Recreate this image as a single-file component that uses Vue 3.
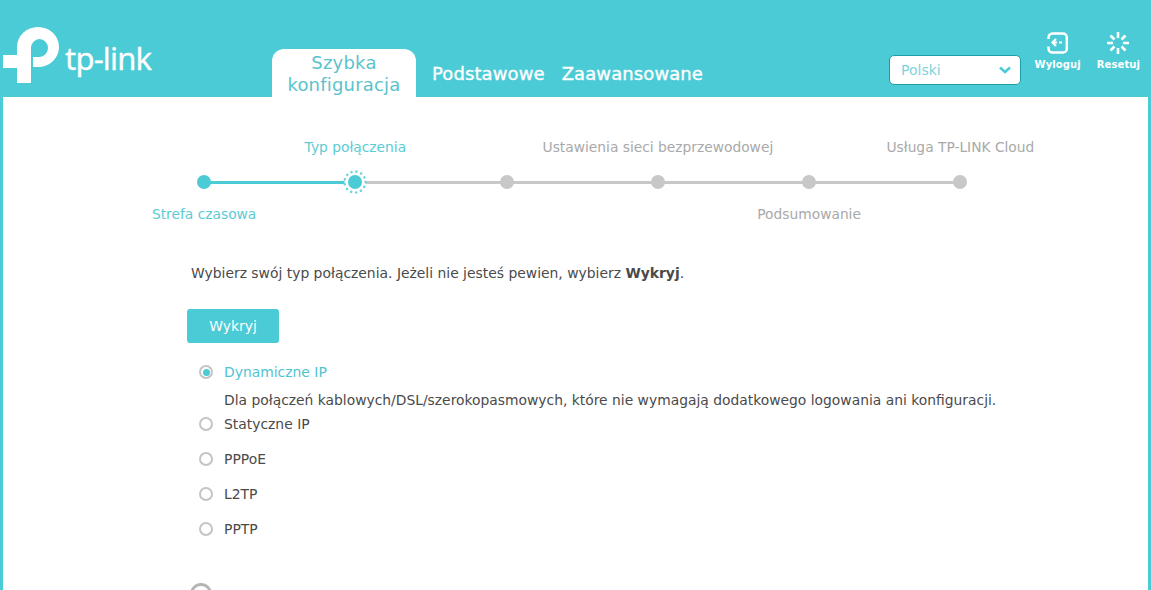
<script setup>
import { ref } from 'vue'

const nodes = [
  { top: '', bottom: 'Strefa czasowa', state: 'done' },
  { top: 'Typ połączenia', bottom: '', state: 'current' },
  { top: '', bottom: '', state: '' },
  { top: 'Ustawienia sieci bezprzewodowej', bottom: '', state: '' },
  { top: '', bottom: 'Podsumowanie', state: '' },
  { top: 'Usługa TP-LINK Cloud', bottom: '', state: 'last' }
]

const types = ['Dynamiczne IP', 'Statyczne IP', 'PPPoE', 'L2TP', 'PPTP']
const selected = ref('Dynamiczne IP')
</script>

<template>
  <div class="page">
    <header class="top">
      <div class="logo">
        <svg class="logo-mark" viewBox="3 27 57 56" width="57" height="56">
          <path d="M3 55H17V47A21 20 0 1 1 38 67H33V57H39.500A8.500 9 0 1 0 31 48V83H17V68H3Z" fill="#fff" />
        </svg>
        <span class="logo-text">tp-link</span>
      </div>

      <nav class="tabs">
        <a class="tab active">Szybka<br>konfiguracja</a>
        <a class="tab">Podstawowe</a>
        <a class="tab">Zaawansowane</a>
      </nav>

      <div class="lang">
        <span>Polski</span>
        <svg width="14" height="8" viewBox="0 0 14 8"><path d="M2 1.500l5 4.500 5-4.500" fill="none" stroke="#4acbd6" stroke-width="2.500" /></svg>
      </div>

      <div class="actions">
        <a class="action">
          <svg width="24" height="24" viewBox="0 0 24 24" fill="none" stroke="#fff" stroke-width="2.500">
            <path d="M2.500 8V6.500A4 4 0 0 1 6.500 2.500H17A3.800 3.800 0 0 1 20.800 6.300V17.700A3.800 3.800 0 0 1 17 21.500H6.500A4 4 0 0 1 2.500 17.500V15.500" />
            <path d="M10 8L6.500 11.500 10 15" stroke-width="2.200" />
            <path d="M7 11.500H11M13 11.500H16" stroke-width="2.200" />
          </svg>
          <span>Wyloguj</span>
        </a>
        <a class="action">
          <svg width="24" height="24" viewBox="0 0 24 24" fill="none" stroke="#fff" stroke-width="2.600">
            <path d="M12 1v6M12 17v6M1 12h6M17 12h6M4.500 4.500l4 4M15.500 15.500l4 4M19.500 4.500l-4 4M8.500 15.500l-4 4" />
          </svg>
          <span>Resetuj</span>
        </a>
      </div>
    </header>

    <main class="content">
      <div class="stepper">
        <div v-for="n in nodes" :key="n.top + n.bottom" :class="['step', n.state]">
          <div class="step-label">{{ n.top }}</div>
          <div class="node-row">
            <span class="dot">
              <svg v-if="n.state === 'current'" class="ring" width="24" height="24" viewBox="0 0 24 24">
                <circle cx="12" cy="12" r="10.500" fill="#fff" />
                <circle cx="12" cy="12" r="10.500" fill="none" stroke="#6fd3dc" stroke-width="2.600" stroke-linecap="round" stroke-dasharray="0.01 5.054" />
                <circle cx="12" cy="12" r="7" fill="#4acbd6" />
              </svg>
            </span>
          </div>
          <div class="step-label under">{{ n.bottom }}</div>
        </div>
      </div>

      <section class="form">
        <p class="hint">Wybierz swój typ połączenia. Jeżeli nie jesteś pewien, wybierz <b>Wykryj</b>.</p>
        <button class="detect">Wykryj</button>

        <ul class="types">
          <li v-for="t in types" :key="t" :class="{ on: selected === t }" @click="selected = t">
            <div class="type-row">
              <span class="radio"></span>
              <span class="type-name">{{ t }}</span>
            </div>
            <p v-if="selected === t && t === 'Dynamiczne IP'" class="type-desc">Dla połączeń kablowych/DSL/szerokopasmowych, które nie wymagają dodatkowego logowania ani konfiguracji.</p>
          </li>
        </ul>

        <span class="back-ring"></span>
      </section>
    </main>
  </div>
</template>

<style>
html, body {
  margin: 0;
  overflow: hidden;
  height: 100%;
}
</style>

<style scoped>
.page {
  height: 590px;
  overflow: hidden;
  background: #4acbd6;
  font-family: "DejaVu Sans", Verdana, sans-serif;
  color: #4a4a4a;
}

.top {
  height: 97px;
  display: flex;
  align-items: flex-end;
}

.logo {
  width: 272px;
  box-sizing: border-box;
  padding-left: 3px;
  align-self: flex-start;
  margin-top: 27px;
  display: flex;
  align-items: flex-start;
  gap: 5px;
}

.logo-mark {
  flex: none;
}

.logo-text {
  font-family: "Noto Sans", sans-serif;
  color: #fff;
  font-size: 31px;
  letter-spacing: -0.8px;
  line-height: 1;
  margin-top: 16px;
  -webkit-text-stroke: 0.3px #fff;
}

.tabs {
  display: flex;
  align-items: flex-end;
  width: 617px;
}

.tab {
  color: #fff;
  font-size: 18px;
  letter-spacing: 0.1px;
  -webkit-text-stroke: 0.35px #fff;
  height: 46px;
  line-height: 46px;
  padding: 0 8.500px;
}

.tab.active {
  width: 144px;
  height: 48px;
  box-sizing: border-box;
  padding: 3px 0 0;
  margin-right: 7.500px;
  text-align: center;
  background: #fff;
  color: #5cc3cd;
  letter-spacing: 0.2px;
  -webkit-text-stroke: 0;
  line-height: 22px;
  border-radius: 12px 12px 0 0;
}

.lang {
  width: 132px;
  height: 30px;
  box-sizing: border-box;
  margin-bottom: 12px;
  padding: 0 8px 0 11px;
  display: flex;
  align-items: center;
  justify-content: space-between;
  background: #fff;
  border: 1px solid #1e9eaa;
  border-radius: 5px;
  color: #7cd4dc;
  font-size: 14px;
}

.actions {
  display: flex;
  align-self: flex-start;
  margin-top: 31px;
  margin-left: 13.500px;
  gap: 16px;
}

.action {
  display: flex;
  flex-direction: column;
  align-items: center;
  gap: 4px;
  color: #fff;
  font-size: 10px;
  letter-spacing: 0.1px;
  font-weight: 700;
}

.action svg {
  display: block;
}

.content {
  height: 493px;
  margin: 0 3px;
  background: #fff;
  overflow: hidden;
}

.stepper {
  display: flex;
  padding: 38px 0 0 125.500px;
}

.step {
  width: 151.250px;
  display: flex;
  flex-direction: column;
  align-items: center;
  font-size: 13.800px;
  color: #a9a9a9;
}

.step.done,
.step.current {
  color: #5ccbd5;
}

.step-label {
  height: 24px;
  line-height: 24px;
  white-space: nowrap;
  margin-left: -20px;
  margin-right: -20px;
}

.step-label.under {
  height: 20px;
  line-height: 20px;
  margin-top: -1px;
}

.node-row {
  position: relative;
  width: 100%;
  height: 46px;
  display: flex;
  align-items: center;
  justify-content: center;
}

/* connector to the next dot, runs under it */
.node-row::after {
  content: '';
  position: absolute;
  left: 50%;
  width: 100%;
  top: 22px;
  height: 3px;
  background: #c8c8c8;
}

.done .node-row::after {
  background: #4acbd6;
}

.last .node-row::after {
  display: none;
}

.dot {
  position: relative;
  z-index: 1;
  width: 14px;
  height: 14px;
  border-radius: 50%;
  background: #c8c8c8;
}

.done .dot,
.current .dot {
  background: #4acbd6;
}

.ring {
  position: absolute;
  left: -5px;
  top: -5px;
}

.form {
  padding: 39px 0 0 188px;
}

.hint {
  margin: 0;
  font-size: 13.900px;
  line-height: 20px;
}

.hint b {
  font-weight: 700;
}

.detect {
  display: block;
  width: 92px;
  height: 34px;
  margin: 26px 0 0 -4px;
  padding: 0;
  border: 0;
  border-radius: 3px;
  background: #4acbd6;
  color: #fff;
  font: inherit;
  font-size: 13.900px;
}

.types {
  list-style: none;
  margin: 19px 0 0;
  padding: 0 0 0 8px;
}

.types li {
  margin-bottom: 15px;
}

.types li.on {
  margin-bottom: 0;
}

.type-row {
  display: flex;
  align-items: center;
  height: 20px;
  gap: 11px;
  font-size: 13.900px;
}

.on .type-name {
  color: #4fc4cf;
}

.radio {
  position: relative;
  width: 14px;
  height: 14px;
  box-sizing: border-box;
  border: 2px solid #c4c4c4;
  border-radius: 50%;
  background: #fff;
}

.on .radio::after {
  content: '';
  position: absolute;
  inset: 1.500px;
  border-radius: 50%;
  background: #4acbd6;
}

.type-desc {
  margin: 0 0 0 25px;
  font-size: 13.870px;
  line-height: 21px;
  padding-top: 8px;
  padding-bottom: 3px;
  height: 21px;
  white-space: nowrap;
}

.back-ring {
  display: block;
  width: 16px;
  height: 16px;
  margin: 44px 0 0 -1px;
  border: 3px solid #b5b5b5;
  border-radius: 50%;
}
</style>
